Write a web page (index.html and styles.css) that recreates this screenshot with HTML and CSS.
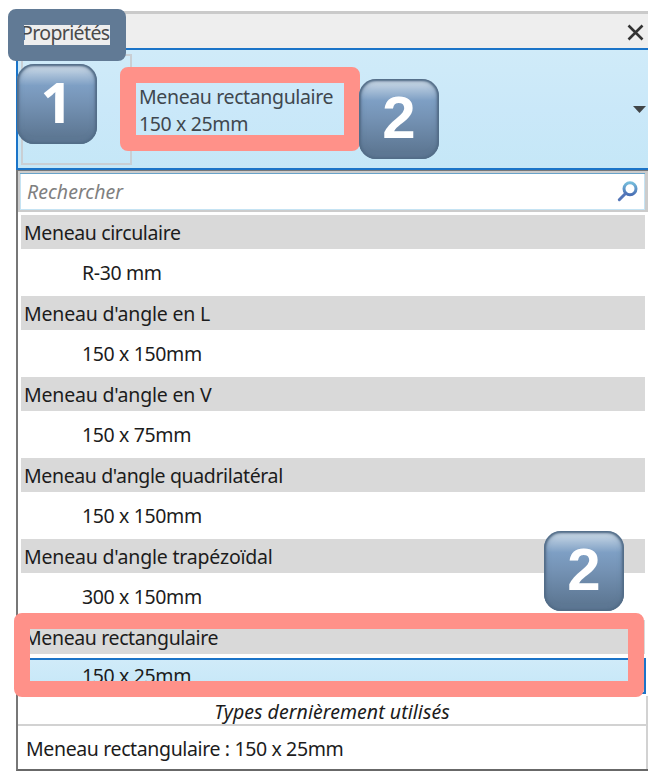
FILE: index.html
```html
<!DOCTYPE html>
<html lang="fr">
<head>
<meta charset="utf-8">
<title>Propriétés</title>
<link rel="stylesheet" href="styles.css">
</head>
<body>
<main class="panel">
  <header class="titlebar">
    <span class="title">Propriétés</span>
    <svg class="close" width="17" height="17" viewBox="0 0 17 17"><path d="M1.5 1.5 15.5 15.5M15.5 1.5 1.5 15.5"/></svg>
  </header>
  <section class="selector">
    <div class="preview"><i class="preview-mark"></i></div>
    <div class="current"><span>Meneau rectangulaire</span><br><span>150 x 25mm</span></div>
    <svg class="arrow" width="13" height="7" viewBox="0 0 13 7"><path d="M0 0H13L6.5 7Z"/></svg>
  </section>
  <section class="dropdown">
    <div class="search">
      <span class="placeholder">Rechercher</span>
      <svg class="lens" width="21" height="21" viewBox="0 0 21 21">
        <defs><linearGradient id="lens" x2="0" y2="1"><stop stop-color="#74bbdb"/><stop offset="1" stop-color="#4a70b5"/></linearGradient></defs>
        <circle cx="13" cy="7.8" r="6" fill="#fff" stroke="url(#lens)" stroke-width="3"/>
        <path d="M8.5 12.5 2.3 18.7" stroke="#5476b8" stroke-width="3" stroke-linecap="round"/>
      </svg>
    </div>
    <div class="list">
      <div class="family"><span>Meneau circulaire</span></div>
      <div class="type"><span>R-30 mm</span></div>
      <div class="family wide"><span>Meneau d'angle en L</span></div>
      <div class="type"><span>150 x 150mm</span></div>
      <div class="family wide"><span>Meneau d'angle en V</span></div>
      <div class="type"><span>150 x 75mm</span></div>
      <div class="family"><span>Meneau d'angle quadrilatéral</span></div>
      <div class="type"><span>150 x 150mm</span></div>
      <div class="family wide"><span>Meneau d'angle trapézoïdal</span></div>
      <div class="type"><span>300 x 150mm</span></div>
      <div class="family"><span>Meneau rectangulaire</span></div>
      <div class="type selected"><span>150 x 25mm</span></div>
    </div>
    <div class="recent-title"><span>Types dernièrement utilisés</span></div>
    <div class="recent"><span>Meneau rectangulaire : 150 x 25mm</span></div>
  </section>
</main>
<div class="frame frame-title"></div>
<div class="frame frame-current"></div>
<div class="frame frame-selected"></div>
<div class="badge badge-one"><span>1</span></div>
<div class="badge badge-two"><span>2</span></div>
<div class="badge badge-list"><span>2</span></div>
</body>
</html>
```
FILE: styles.css
```css
* { box-sizing: border-box; }
body {
  margin: 0;
  height: 782px;
  padding: 11px 10px 0 16px;
  position: relative;
  overflow: hidden;
  background: #fff;
  color: #1c1c1c;
  font: 19.5px/27px "Noto Sans", sans-serif;
  letter-spacing: -0.37px;
  white-space: nowrap;
}
.panel { width: 632px; }
.titlebar {
  height: 37px;
  padding: 0 4px 0 5px;
  display: flex;
  align-items: center;
  justify-content: space-between;
  background: #eee;
  border-top: 3px solid #cacaca;
  color: #4a4a4a;
}
.title { letter-spacing: -0.62px; padding-top: 2px; }
.close { fill: none; stroke: #333; stroke-width: 2.6; margin-top: 2px; }
.selector {
  height: 122px;
  display: flex;
  align-items: center;
  border: 2px solid #1b74c8;
  border-right: 0;
  background: linear-gradient(#d0ebf9, #cae8f9 50%, #c5e7f7);
  color: #3f474e;
}
.preview {
  width: 111px;
  height: 111px;
  margin-left: 3px;
  padding: 8px 0 0 25px;
  border: 2px solid #c9cfd4;
}
.preview-mark { display: block; width: 10px; height: 3px; background: #e0483e; }
.current { margin-left: 7px; padding-top: 1px; flex: 1; }
.arrow { margin: 0 2px 0 0; fill: #414548; }
.dropdown {
  height: 601px;
  border-left: 2px solid #777;
  border-bottom: 2px solid #686868;
  border-top: 1px solid #777;
}
.search {
  height: 41px;
  display: flex;
  align-items: center;
  justify-content: space-between;
  padding: 0 7px 0 7px;
  border: 2px solid #ccc;
  border-right-width: 3px;
  box-shadow: inset 0 1px #68a3c9, inset 1px -1px #c5e3f3, inset -1px 0 #c5e3f3;
}
.placeholder { color: #808080; font-style: italic; letter-spacing: 0.03px; }
.lens { margin-bottom: 1px; }
.list { padding: 3px 2px 0 3px; height: 484px; }
.family {
  height: 34px;
  width: 624px;
  padding: 4px 0 0 3px;
  background: #d9d9d9;
}
.wide { letter-spacing: -0.2px; }
.type { height: 47px; padding: 10px 0 0 61px; }
.selected {
  height: 36px;
  width: 625px;
  margin-top: 4px;
  padding: 2px 0 0 59px;
  border: 2px solid #1b74c8;
  background: linear-gradient(#d0ebf9, #c5e7f7);
}
.recent-title {
  height: 30px;
  padding-top: 2px;
  text-align: center;
  font-style: italic;
  letter-spacing: 0.05px;
  border-right: 2px solid #d2d2d2;
  border-bottom: 2px solid #d2d2d2;
}
.recent {
  height: 43px;
  padding: 9px 0 0 8px;
  border-right: 2px solid #d2d2d2;
}
.frame { position: absolute; border: 16px solid #ff9189; border-radius: 8px; }
.frame-title { left: 8px; top: 9px; width: 118px; height: 52px; border-color: #617a95; }
.frame-current { left: 120px; top: 67px; width: 240px; height: 84px; }
.frame-selected { left: 14px; top: 613px; width: 630px; height: 84px; }
.badge {
  position: absolute;
  width: 80px;
  height: 80px;
  display: flex;
  align-items: center;
  justify-content: center;
  border-radius: 17px;
  background: linear-gradient(#c9d8e6 4%, #a9c0d8 13%, #7e9fc4 27%, #7593b5 48%, #5e7894 90%);
  box-shadow: inset 0 0 2px 2px #536d88, inset 0 0 5px 2px #59738e88;
  color: #fff;
  font: bold 60px/76px "Liberation Sans", sans-serif;
  letter-spacing: 0;
  padding-bottom: 2px;
}
.badge-one { left: 17px; top: 64px; }
.badge-one span { font-family: "Noto Sans", sans-serif; font-size: 56px; margin: -4px 0 0 -1px; }
.badge-two { left: 359px; top: 79px; }
.badge-list { left: 544px; top: 531px; }
```
